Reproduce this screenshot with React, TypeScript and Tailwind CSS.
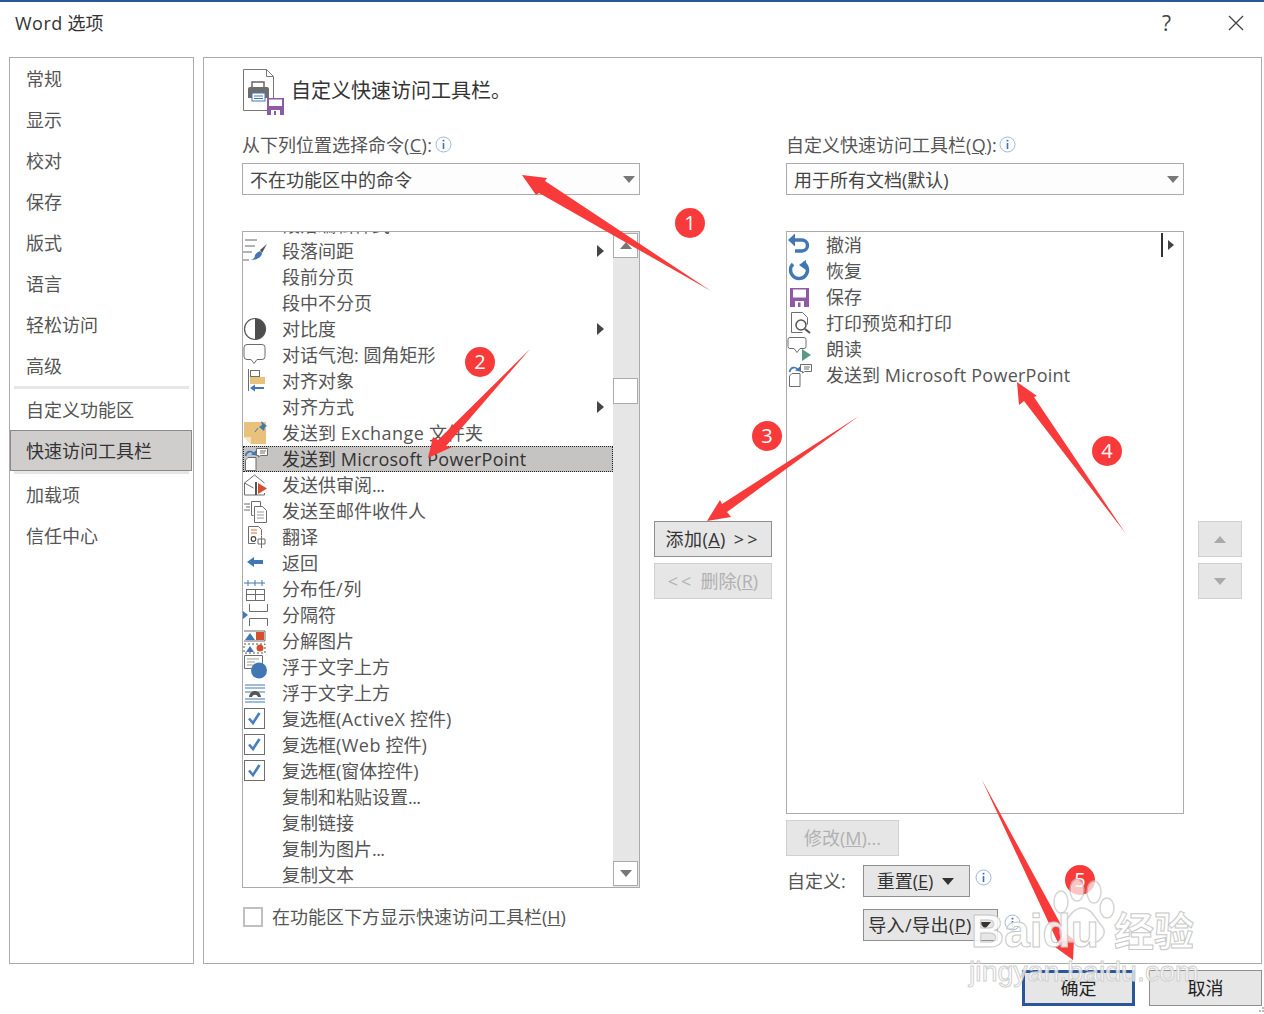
/*
  Word Options dialog, Quick Access Toolbar page, with red tutorial arrows on top
*/
import type { ReactNode } from "react";

const BLUE = "#4178b4";
const GREY = "#6d6d6d";

function Ic({ children }: { children: ReactNode }) {
  return (
    <svg width="26" height="26" viewBox="0 0 26 26" fill="none" className="shrink-0">
      {children}
    </svg>
  );
}

// latin runs sit a little wider than the fallback font draws them
function L({ children }: { children: ReactNode }) {
  return <span className="tracking-[0.45px]">{children}</span>;
}

function Dots() {
  return <span className="tracking-[-0.6px]">...</span>;
}

const pptText = (
  <>
    发送到 <span className="tracking-[0.25px]">Microsoft PowerPoint</span>
  </>
);

const pptIcon = (
  <Ic>
    <path d="M5 11.5h8v13H2.5V14z" fill="#fff" stroke={GREY} />
    <path d="M13.5 2.5h11v7h-7l-2 1.5V9.5h-2z" fill="#fff" stroke={GREY} />
    <path d="M17 7h5M17 5h6" stroke={GREY} />
    <path d="M2.5 10c1-5 6-6 8.500-2" stroke={BLUE} strokeWidth="1.6" />
    <path d="M8 8.500l5 1 0-5z" fill={BLUE} />
  </Ic>
);

const checkIcon = (
  <Ic>
    <rect x="1.500" y="2.500" width="20" height="20" fill="#fff" stroke={GREY} />
    <path d="M6 12.500l4 4.500 6.500-10" stroke="#4a7ebb" strokeWidth="2.6" />
  </Ic>
);

const leftRows: { label: ReactNode; icon?: ReactNode; sub?: boolean; on?: boolean }[] = [
  { label: "段落编辑样式" },
  {
    label: "段落间距",
    sub: true,
    icon: (
      <Ic>
        <path d="M2 2h12M2 8h10M0 14h9M0 22h6" stroke="#666" />
        <path d="M24 6l-7 6 2 3z" fill="#555" />
        <path d="M17 13l2 2c0 4-5 7-11 7 3-1 4-3 4-5 1-2 3-3 5-4z" fill={BLUE} />
      </Ic>
    ),
  },
  { label: "段前分页" },
  { label: "段中不分页" },
  {
    label: "对比度",
    sub: true,
    icon: (
      <Ic>
        <circle cx="12" cy="13" r="10.5" fill="#fff" stroke="#555" strokeWidth="1.2" />
        <path d="M12 2.500a10.500 10.500 0 0 1 0 21z" fill="#4d4d4d" />
      </Ic>
    ),
  },
  {
    label: "对话气泡: 圆角矩形",
    icon: (
      <Ic>
        <path d="M4 2.500h15a3 3 0 0 1 3 3v9a3 3 0 0 1-3 3h-5l-3 4-3-4H4a3 3 0 0 1-3-3v-9a3 3 0 0 1 3-3z" fill="#fff" stroke={GREY} />
      </Ic>
    ),
  },
  {
    label: "对齐对象",
    icon: (
      <Ic>
        <path d="M5.500 1v22" stroke={GREY} />
        <rect x="7.500" y="2.500" width="9" height="6" fill="#fff" stroke={GREY} />
        <rect x="7" y="9" width="15" height="7" fill="#e8c27d" />
        <path d="M7 20l5-3.500v2.500h9v2h-9v2.500z" fill={BLUE} />
      </Ic>
    ),
  },
  { label: "对齐方式", sub: true },
  {
    label: (
      <>
        发送到 <L>Exchange</L> 文件夹
      </>
    ),
    icon: (
      <Ic>
        <path d="M1 2h22v22H8l-7-7z" fill="#e8c27d" />
        <path d="M1 17h7v7z" fill="#f5e3c0" />
        <path d="M18 1l6 5-2 1-1 4-5-4 3-2z" fill={BLUE} />
        <path d="M15 8l-3 4" stroke={BLUE} />
      </Ic>
    ),
  },
  { label: pptText, on: true, icon: pptIcon },
  {
    label: (
      <>
        发送供审阅
        <Dots />
      </>
    ),
    icon: (
      <Ic>
        <path d="M1.500 11l10-8 10 8M1.500 11v12h20V21M1.500 11l9 5" stroke={GREY} fill="#fff" />
        <path d="M12 10h2v13h-2z" fill="#555" />
        <path d="M15 11l9 5.500-9 5.500z" fill="#d2502d" />
      </Ic>
    ),
  },
  {
    label: "发送至邮件收件人",
    icon: (
      <Ic>
        <path d="M1 6h6M3 9h4M1 12h6" stroke={GREY} />
        <path d="M8.500 3.500h9v5M8.500 3.500v14h2" stroke={GREY} />
        <path d="M11.500 8.500h8l4 4v12h-12z" fill="#fff" stroke={GREY} />
        <path d="M14 14h7M14 17h7M14 20h7" stroke="#999" />
      </Ic>
    ),
  },
  {
    label: "翻译",
    icon: (
      <Ic>
        <path d="M5.500 2.500h10l3 3v6M5.500 2.500v17h7" stroke={GREY} />
        <path d="M8 6h6M8 9h6" stroke="#d2702d" />
        <path d="M15 15h7M18.500 12v12M15 15v5h7v-5" stroke={GREY} />
        <circle cx="10.500" cy="15" r="2.300" stroke="#444" strokeWidth="1.2" />
      </Ic>
    ),
  },
  {
    label: "返回",
    icon: (
      <Ic>
        <path d="M4 12l7-5v3h9v4h-9v3z" fill={BLUE} />
      </Ic>
    ),
  },
  {
    label: (
      <>
        分布任<span className="tracking-[1px]">/</span>列
      </>
    ),
    icon: (
      <Ic>
        <path d="M1 7h21M5 4v6M12 4v6M19 4v6" stroke={BLUE} />
        <rect x="3.500" y="13.500" width="18" height="11" stroke={GREY} />
        <path d="M12.500 13v11M3 18.500h18" stroke={GREY} />
      </Ic>
    ),
  },
  {
    label: "分隔符",
    icon: (
      <Ic>
        <path d="M6.500 2v7.500h18V2M6.500 24v-7.500h18V24" stroke={GREY} />
        <path d="M0 9l5 4-5 4z" fill={BLUE} />
      </Ic>
    ),
  },
  {
    label: "分解图片",
    icon: (
      <Ic>
        <path d="M1 3h21v10H1" stroke={GREY} />
        <path d="M2 12l5-7 5 7z" fill={BLUE} />
        <rect x="13" y="4" width="8" height="8" fill="#d2502d" />
        <path d="M1 16h21v9H1z" stroke="#555" strokeDasharray="2 2" />
        <path d="M3 24l4-6 4 6z" fill={BLUE} />
        <circle cx="17" cy="20" r="3.500" fill="#d2502d" />
      </Ic>
    ),
  },
  {
    label: "浮于文字上方",
    icon: (
      <Ic>
        <path d="M1.500 1.500h18v13h-18z" stroke={GREY} fill="#fff" />
        <path d="M4 5h12M4 8h8M4 11h6" stroke="#999" />
        <circle cx="16" cy="16.500" r="8" fill={BLUE} />
      </Ic>
    ),
  },
  {
    label: "浮于文字上方",
    icon: (
      <Ic>
        <path d="M2 5h20M2 8h20M2 12h20M2 19h20M2 22h20" stroke={BLUE} />
        <path d="M6 17c1-8 11-8 12 0h-3c-1-3-5-3-6 0z" fill="#555" />
      </Ic>
    ),
  },
  {
    label: (
      <>
        复选框<L>(ActiveX</L> 控件<L>)</L>
      </>
    ),
    icon: checkIcon,
  },
  {
    label: (
      <>
        复选框<L>(Web</L> 控件<L>)</L>
      </>
    ),
    icon: checkIcon,
  },
  { label: "复选框(窗体控件)", icon: checkIcon },
  {
    label: (
      <>
        复制和粘贴设置
        <Dots />
      </>
    ),
  },
  { label: "复制链接" },
  {
    label: (
      <>
        复制为图片
        <Dots />
      </>
    ),
  },
  { label: "复制文本" },
];

const rightRows: { label: ReactNode; icon: ReactNode; bar?: boolean }[] = [
  {
    label: "撤消",
    bar: true,
    icon: (
      <Ic>
        <path d="M3 8h12a5.500 5.500 0 0 1 0 11H8" stroke={BLUE} strokeWidth="3.4" />
        <path d="M8 1.500L1 8l7 6.500z" fill={BLUE} />
      </Ic>
    ),
  },
  {
    label: "恢复",
    icon: (
      <Ic>
        <path d="M6 6a8.500 8.500 0 1 0 10-1.500" stroke={BLUE} strokeWidth="3.4" />
        <path d="M19 2v10l-7-5z" fill={BLUE} />
      </Ic>
    ),
  },
  {
    label: "保存",
    icon: (
      <Ic>
        <path d="M3 4h19v19H3z" fill="#8e5aa8" />
        <rect x="6" y="5.500" width="13" height="8" fill="#fff" />
        <rect x="8" y="17" width="9" height="6" fill="#fff" />
        <rect x="11" y="18.500" width="2.500" height="4.500" fill="#8e5aa8" />
      </Ic>
    ),
  },
  {
    label: "打印预览和打印",
    icon: (
      <Ic>
        <path d="M4.500 2.500h11l5 5v7M4.500 2.500v20h11" stroke={GREY} />
        <circle cx="14" cy="15" r="5" stroke="#555" strokeWidth="1.5" fill="#fff" />
        <path d="M18 19l5 4" stroke="#555" strokeWidth="2.2" />
      </Ic>
    ),
  },
  {
    label: "朗读",
    icon: (
      <Ic>
        <path d="M3 1.500h14a2 2 0 0 1 2 2v7a2 2 0 0 1-2 2h-4l-3 4-3-4H3a2 2 0 0 1-2-2v-7a2 2 0 0 1 2-2z" fill="#fff" stroke={GREY} />
        <path d="M15 13l9 6-9 6z" fill="#5a9a84" />
      </Ic>
    ),
  },
  { label: pptText, icon: pptIcon },
];

const navTop = ["常规", "显示", "校对", "保存", "版式", "语言", "轻松访问", "高级"];

function Info() {
  return (
    <svg width="17" height="17" viewBox="0 0 17 17" fill="none" className="shrink-0">
      <circle cx="8.500" cy="8.500" r="7.500" stroke="#9db9dc" fill="#fff" />
      <path d="M8.500 7v6" stroke="#3f70b0" strokeWidth="1.6" />
      <path d="M8.500 3.800v1.700" stroke="#3f70b0" strokeWidth="1.8" />
    </svg>
  );
}

function Tri({ up, color = "#777" }: { up?: boolean; color?: string }) {
  return (
    <svg width="12" height="7" viewBox="0 0 12 7" className="shrink-0">
      <path d={up ? "M6 0l6 7H0z" : "M0 0h12L6 7z"} fill={color} />
    </svg>
  );
}

function SubArrow() {
  return (
    <svg width="7" height="12" viewBox="0 0 7 12" className="shrink-0">
      <path d="M0 0l7 6-7 6z" fill="#444" />
    </svg>
  );
}

function Select({ text }: { text: string }) {
  return (
    <div className="h-[32px] flex items-center justify-between pl-[7px] pr-[4px] border border-[#ababab] bg-[#fdfdfd] text-[#444]">
      <span className="pt-[1px]">{text}</span>
      <Tri />
    </div>
  );
}

function Label({ text, k }: { text: string; k: string }) {
  return (
    <div className="h-[24px] mb-[5px] flex items-center text-[#555]">
      <span className="pb-[2px]">
        {text}
        <L>
          (<u>{k}</u>):
        </L>
      </span>
      <div className="ml-[2px] mb-[4px]">
        <Info />
      </div>
    </div>
  );
}

function Btn({ children, off, className = "" }: { children: ReactNode; off?: boolean; className?: string }) {
  return (
    <div
      className={
        "flex items-center justify-center bg-[#e6e6e6] border " +
        (off ? "border-[#d0d0d0] text-[#b1b1b1] " : "border-[#8f8f8f] text-[#333] ") +
        className
      }
    >
      {children}
    </div>
  );
}

function Badge({ n, className }: { n: number; className: string }) {
  return (
    <div
      className={
        "absolute w-[30px] h-[30px] rounded-full bg-[#f93a3a] text-white text-[20px] flex items-center justify-center " +
        className
      }
    >
      {n}
    </div>
  );
}

export default function App() {
  return (
    <div className="relative w-[1264px] h-[1014px] overflow-hidden bg-white text-[18px] leading-[26px] font-['Open_Sans','Noto_Sans_CJK_SC',sans-serif]">
      <div className="h-[2px] bg-[#2b579a]" />

      {/* title bar */}
      <div className="h-[55px] pb-[13px] pl-[15px] pr-[20px] flex items-center justify-between text-[#333]">
        <span>
          <span className="tracking-[0.5px]">Word</span> 选项
        </span>
        <div className="flex items-center gap-[57px]">
          <span className="text-[21px] text-[#444]">?</span>
          <svg width="16" height="16" viewBox="0 0 16 16" fill="none">
            <path d="M1 1l14 14M15 1L1 15" stroke="#444" strokeWidth="1.3" />
          </svg>
        </div>
      </div>

      <div className="flex gap-[9px] pl-[9px] pr-[2px] h-[907px]">
        {/* sidebar */}
        <div className="w-[185px] border border-[#ababab] text-[#555]">
          {navTop.map((t) => (
            <div key={t} className="h-[41px] pl-[16px] flex items-center">
              {t}
            </div>
          ))}
          <div className="h-[3px] mx-[4px] bg-[#e6e6e6]" />
          <div className="h-[41px] pl-[16px] flex items-center">自定义功能区</div>
          <div className="h-[41px] pl-[15px] mr-[1px] flex items-center bg-[#d0cecd] border border-[#8a8a8a] text-[#333]">
            快速访问工具栏
          </div>
          <div className="h-[3px] mx-[4px] bg-[#e6e6e6]" />
          <div className="h-[41px] pl-[16px] flex items-center">加载项</div>
          <div className="h-[41px] pl-[16px] flex items-center">信任中心</div>
        </div>

        {/* main panel */}
        <div className="flex-1 border border-[#ababab] pl-[38px] pt-[11px]">
          <div className="h-[45px] pl-[1px] flex items-center gap-[7px] text-[20px] text-[#333]">
            <svg width="41" height="46" viewBox="0 0 41 46" fill="none" className="shrink-0">
              <path d="M.5.5h23l7 7v34H.5z" fill="#fff" stroke="#777" />
              <path d="M23.500.5v7h7" stroke="#777" />
              <rect x="9" y="13" width="12" height="6" fill="#fff" stroke="#666" strokeWidth="1.5" />
              <path d="M5 20a2 2 0 0 1 2-2h17a2 2 0 0 1 2 2v9H5z" fill="#6d6d6d" />
              <rect x="9" y="24" width="13" height="8" fill="#fff" stroke="#4178b4" />
              <path d="M11 27h9M11 29.500h9" stroke="#4178b4" />
              <rect x="24" y="29" width="17" height="17" fill="#8e5aa8" />
              <rect x="26" y="30.500" width="13" height="6.500" fill="#fff" />
              <rect x="28" y="41" width="9" height="5" fill="#fff" />
              <rect x="31" y="42" width="2" height="4" fill="#8e5aa8" />
            </svg>
            <span className="pb-[2px]">自定义快速访问工具栏。</span>
          </div>

          <div className="flex mt-[20px]">
            {/* commands list */}
            <div className="w-[398px]">
              <Label text="从下列位置选择命令" k="C" />
              <Select text="不在功能区中的命令" />
              <div className="mt-[36px] h-[657px] border border-[#ababab] flex overflow-hidden">
                <div className="flex-1 min-w-0 overflow-hidden text-[#555]">
                  <div className="-mt-[20px]">
                    {leftRows.map((r, i) => (
                      <div
                        key={i}
                        className={
                          "h-[26px] flex items-center pr-[9px] " +
                          (r.on ? "bg-[#c6c4c3] outline-1 outline-dotted -outline-offset-1 outline-[#222] text-[#333]" : "")
                        }
                      >
                        <div className="w-[39px] shrink-0">{r.icon}</div>
                        <span className="flex-1 whitespace-nowrap">{r.label}</span>
                        {r.sub && <SubArrow />}
                      </div>
                    ))}
                  </div>
                </div>
                <div className="w-[26px] shrink-0 bg-[#e6e6e6] flex flex-col pb-[1px] pt-[1px]">
                  <div className="h-[25px] mr-[1px] bg-white border border-[#ababab] flex items-center justify-center">
                    <Tri up />
                  </div>
                  <div className="h-[26px] mt-[120px] mr-[1px] bg-white border border-[#ababab]" />
                  <div className="mt-auto h-[25px] mr-[1px] bg-white border border-[#ababab] flex items-center justify-center">
                    <Tri />
                  </div>
                </div>
              </div>
              <div className="mt-[16px] h-[26px] flex items-center gap-[9px] text-[#555]">
                <div className="ml-[1px] w-[20px] h-[20px] border-2 border-[#c0c0c0]" />
                <span>
                  在功能区下方显示快速访问工具栏(<u>H</u>)
                </span>
              </div>
            </div>

            {/* add / remove */}
            <div className="w-[146px] pl-[14px] pt-[387px]">
              <Btn className="w-[118px] h-[36px] gap-[8px]">
                <L>
                  添加(<u>A</u>)
                </L>
                <span className="tracking-[3px]">&gt;&gt;</span>
              </Btn>
              <Btn off className="w-[118px] h-[36px] mt-[6px] gap-[6px]">
                <span className="tracking-[3px]">&lt;&lt;</span>
                <span>
                  删除(<u>R</u>)
                </span>
              </Btn>
            </div>

            {/* toolbar list */}
            <div className="w-[398px]">
              <Label text="自定义快速访问工具栏" k="Q" />
              <Select text="用于所有文档(默认)" />
              <div className="mt-[36px] h-[583px] border border-[#ababab] text-[#555]">
                {rightRows.map((r, i) => (
                  <div key={i} className="h-[26px] flex items-center pr-[9px]">
                    <div className="w-[39px] shrink-0">{r.icon}</div>
                    <span className="flex-1 whitespace-nowrap">{r.label}</span>
                    {r.bar && (
                      <div className="flex items-center gap-[5px]">
                        <div className="w-[2px] h-[24px] bg-[#333]" />
                        <svg width="6" height="10" viewBox="0 0 6 10">
                          <path d="M0 0l6 5-6 5z" fill="#444" />
                        </svg>
                      </div>
                    )}
                  </div>
                ))}
              </div>
              <Btn off className="w-[113px] h-[36px] mt-[6px]">
                修改(<u>M</u>)...
              </Btn>
              <div className="mt-[9px] flex items-start text-[#555]">
                <span className="w-[77px] pl-[1px] h-[32px] flex items-center">自定义:</span>
                <Btn className="w-[107px] h-[32px] gap-[9px] pr-[2px]">
                  <span>
                    重置(<u>E</u>)
                  </span>
                  <Tri color="#333" />
                </Btn>
                <div className="ml-[5px] mt-[4px]">
                  <Info />
                </div>
              </div>
              <div className="mt-[12px] ml-[77px] flex items-start">
                <Btn className="w-[135px] h-[32px] gap-[7px] pr-[2px]">
                  <L>
                    导入/导出(<u>P</u>)
                  </L>
                  <Tri color="#333" />
                </Btn>
                <div className="ml-[6px] mt-[5px]">
                  <Info />
                </div>
              </div>
            </div>

            {/* move up / down */}
            <div className="pl-[14px] pt-[387px]">
              <Btn off className="w-[44px] h-[36px]">
                <Tri up color="#aaa" />
              </Btn>
              <Btn off className="w-[44px] h-[36px] mt-[6px]">
                <Tri color="#aaa" />
              </Btn>
            </div>
          </div>
        </div>
      </div>

      {/* footer */}
      <div className="pt-[6px] pr-[2px] flex justify-end gap-[14px]">
        <div className="w-[113px] h-[36px] flex items-center justify-center bg-[#e6e6e6] border-[3px] border-[#2b579a] text-[#222]">
          确定
        </div>
        <div className="w-[113px] h-[36px] flex items-center justify-center bg-[#e6e6e6] border border-[#8f8f8f] text-[#222]">
          取消
        </div>
      </div>

      {/* tutorial annotations */}
      <svg width="1264" height="1014" viewBox="0 0 1264 1014" className="absolute inset-0 pointer-events-none">
        <g fill="#f93a3a">
          <polygon points="522,175 547,178 545,181 711,291 539,193 536,195" />
          <polygon points="530,349 446,446 452,447 428,458 433,437 438,440" />
          <polygon points="859,416 727,512 731,517 707,521 720,500 722,504" />
          <polygon points="1017,382 1037,396 1034,397 1126,534 1024,401 1019,405" />
          <polygon points="982,780 1065,932 1074,940 1073,960 1055,947 1059,945" />
        </g>
      </svg>
      <Badge n={1} className="left-[675px] top-[208px]" />
      <Badge n={2} className="left-[465px] top-[347px]" />
      <Badge n={3} className="left-[752px] top-[421px]" />
      <Badge n={4} className="left-[1092px] top-[436px]" />
      <Badge n={5} className="left-[1065px] top-[865px]" />

      {/* baidu watermark */}
      <svg width="70" height="72" viewBox="0 0 70 72" className="absolute left-[1047px] top-[878px] opacity-70">
        <g fill="#fff" stroke="#c4c4c4" strokeWidth="1.5">
          <ellipse cx="14" cy="24" rx="7" ry="11" />
          <ellipse cx="30" cy="12" rx="7" ry="11" />
          <ellipse cx="47" cy="14" rx="7" ry="11" />
          <ellipse cx="60" cy="30" rx="7" ry="10" />
          <path d="M35 30c10 0 14 12 20 18 6 8-2 18-12 16-6-1-10-2-16 0-10 2-18-8-12-16 6-6 10-18 20-18z" />
        </g>
      </svg>
      <span className="absolute left-[971px] top-[905px] text-[46px] leading-[52px] font-bold font-['Liberation_Sans',sans-serif] text-white/85 [-webkit-text-stroke:1px_#c8c8c8]">
        Baidu
      </span>
      <span className="absolute left-[1114px] top-[908px] text-[40px] leading-[46px] font-bold text-white/85 [-webkit-text-stroke:1px_#c8c8c8]">
        经验
      </span>
      <span className="absolute left-[969px] top-[955px] text-[28.500px] leading-[32px] font-['Liberation_Sans',sans-serif] text-white/75 [-webkit-text-stroke:1px_#d0d0d0]">
        jingyan.baidu.com
      </span>

      {/* resize grip */}
      <svg width="8" height="8" viewBox="0 0 8 8" className="absolute right-0 bottom-0">
        <path d="M6 1h2v2H6zM3 4h2v2H3zM6 4h2v2H6z" fill="#bbb" />
      </svg>
    </div>
  );
}
